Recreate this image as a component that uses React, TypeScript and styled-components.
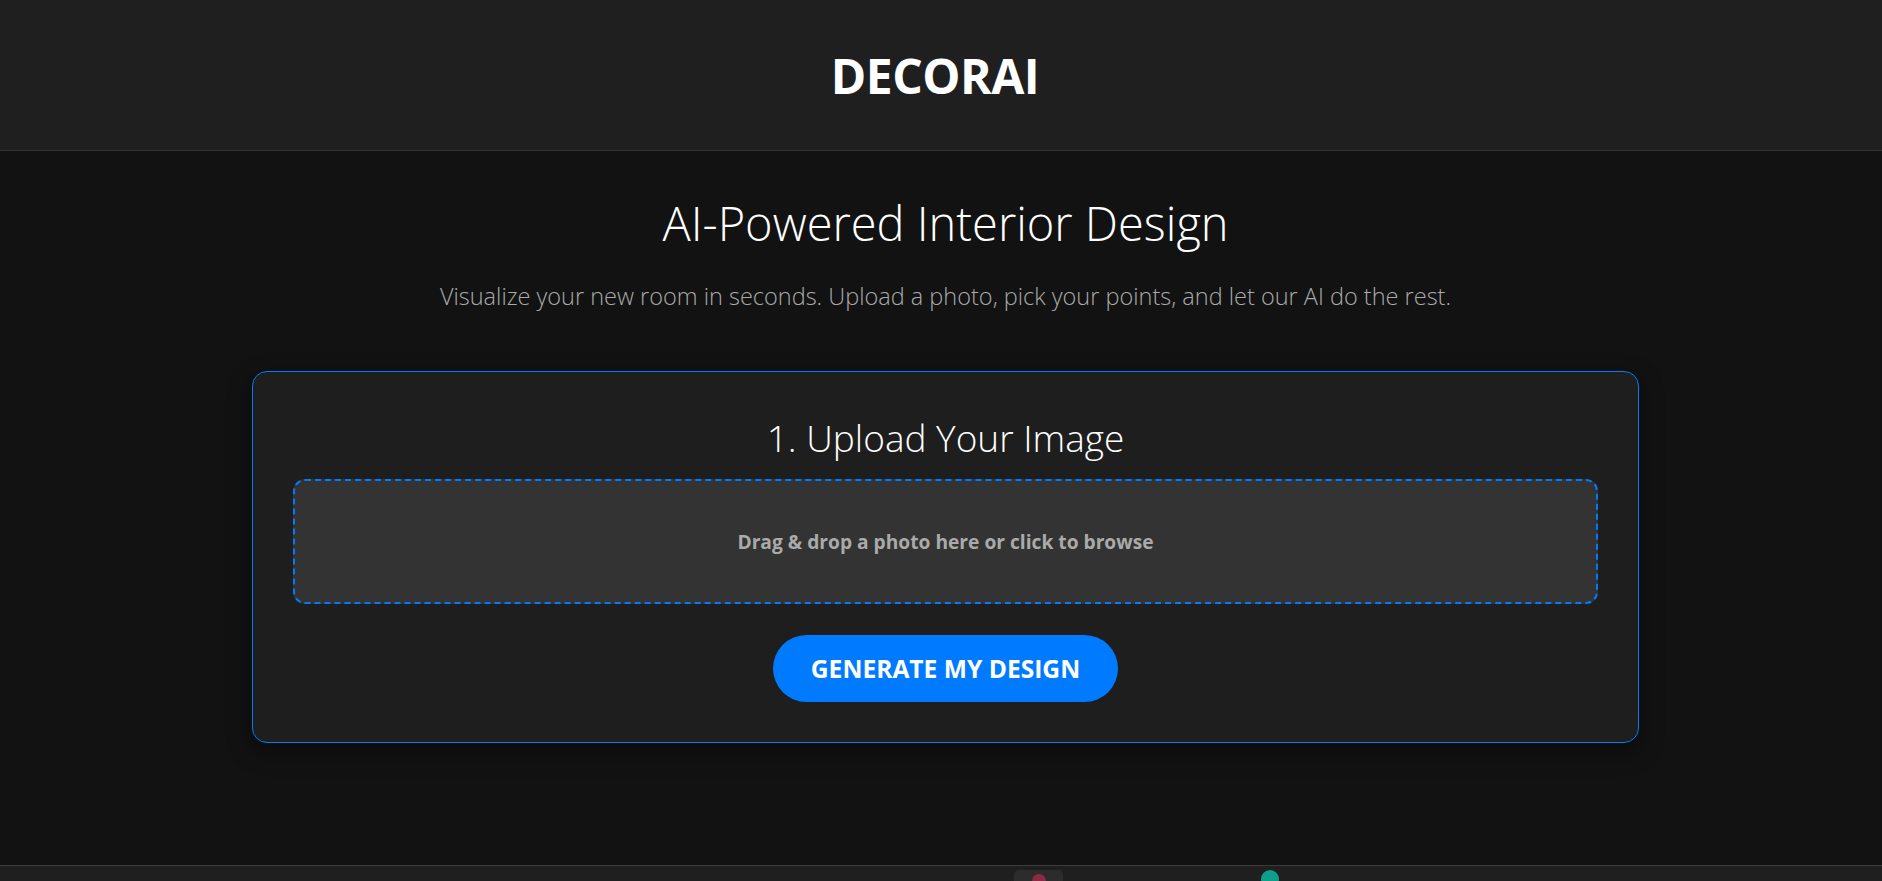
import styled, { createGlobalStyle } from 'styled-components';

const GlobalStyle = createGlobalStyle`
  * {
    box-sizing: border-box;
  }

  html, body {
    margin: 0;
    padding: 0;
    background: #121212;
    color: #ffffff;
    font-family: 'Open Sans', 'Noto Sans', 'Liberation Sans', sans-serif;
  }
`;

const Page = styled.div`
  min-height: 100vh;
  display: flex;
  flex-direction: column;
  background: #121212;
`;

const Header = styled.header`
  height: 151px;
  display: flex;
  align-items: center;
  justify-content: center;
  padding-right: 12px;
  background: #1f1f1f;
  border-bottom: 1px solid #333333;
`;

const Logo = styled.h1`
  margin: 0;
  font-size: 48px;
  font-weight: 700;
  letter-spacing: -0.5px;
  color: #ffffff;
`;

const Main = styled.main`
  flex: 1;
  display: flex;
  flex-direction: column;
  align-items: center;
  padding: 40px 20px 40px 29px;
`;

const Heading = styled.h2`
  margin: 0;
  font-size: 47px;
  font-weight: 300;
  color: #ffffff;
`;

const Tagline = styled.p`
  margin: 25px 0 0;
  font-size: 23.5px;
  font-weight: 300;
  color: #aaaaaa;
`;

const Card = styled.section`
  width: 1387px;
  margin-top: 59px;
  padding: 40px;
  display: flex;
  flex-direction: column;
  align-items: center;
  background: #1e1e1e;
  border: 1px solid #007bff;
  border-radius: 15px;
  box-shadow: 0 8px 24px rgba(0, 0, 0, 0.45);
`;

const StepTitle = styled.h3`
  margin: 0 0 16px;
  font-size: 37px;
  font-weight: 300;
  color: #ffffff;
`;

const DropZone = styled.div`
  width: 100%;
  height: 125px;
  display: flex;
  align-items: center;
  justify-content: center;
  background: #333333;
  border: 2px dashed #007bff;
  border-radius: 12px;
  cursor: pointer;
`;

const DropText = styled.span`
  font-size: 19.2px;
  font-weight: 700;
  color: #aaaaaa;
`;

const GenerateButton = styled.button`
  margin-top: 31px;
  height: 67px;
  padding: 0 38px;
  border: none;
  border-radius: 34px;
  background: #007bff;
  color: #ffffff;
  font-family: inherit;
  font-size: 24.6px;
  font-weight: 700;
  text-transform: uppercase;
  cursor: pointer;
`;

const Taskbar = styled.footer`
  height: 16px;
  display: flex;
  align-items: flex-start;
  padding-top: 4px;
  background: #1f1f1f;
  border-top: 1px solid #3c3c3c;
  overflow: hidden;
`;

const TaskSlot = styled.div<{ $left: number; $width: number }>`
  margin-left: ${p => p.$left}px;
  width: ${p => p.$width}px;
  height: 20px;
  display: flex;
  justify-content: center;
`;

const AppTile = styled.div`
  width: 49px;
  height: 20px;
  display: flex;
  justify-content: center;
  padding-top: 4px;
  background: #2c2c2c;
  border-radius: 5px;
`;

const Dot = styled.div<{ $color: string; $size: number }>`
  width: ${p => p.$size}px;
  height: ${p => p.$size}px;
  border-radius: 50%;
  background: ${p => p.$color};
`;

export default function App() {
  return (
    <Page>
      <GlobalStyle />
      <Header>
        <Logo>DECORAI</Logo>
      </Header>
      <Main>
        <Heading>AI-Powered Interior Design</Heading>
        <Tagline>
          Visualize your new room in seconds. Upload a photo, pick your points, and let our AI do the rest.
        </Tagline>
        <Card>
          <StepTitle>1. Upload Your Image</StepTitle>
          <DropZone>
            <DropText>Drag &amp; drop a photo here or click to browse</DropText>
          </DropZone>
          <GenerateButton>Generate My Design</GenerateButton>
        </Card>
      </Main>
      <Taskbar>
        <TaskSlot $left={1014} $width={49}>
          <AppTile>
            <Dot $color="#8a2a45" $size={14} />
          </AppTile>
        </TaskSlot>
        <TaskSlot $left={197} $width={20}>
          <Dot $color="#0f9e8a" $size={18} />
        </TaskSlot>
      </Taskbar>
    </Page>
  );
}
